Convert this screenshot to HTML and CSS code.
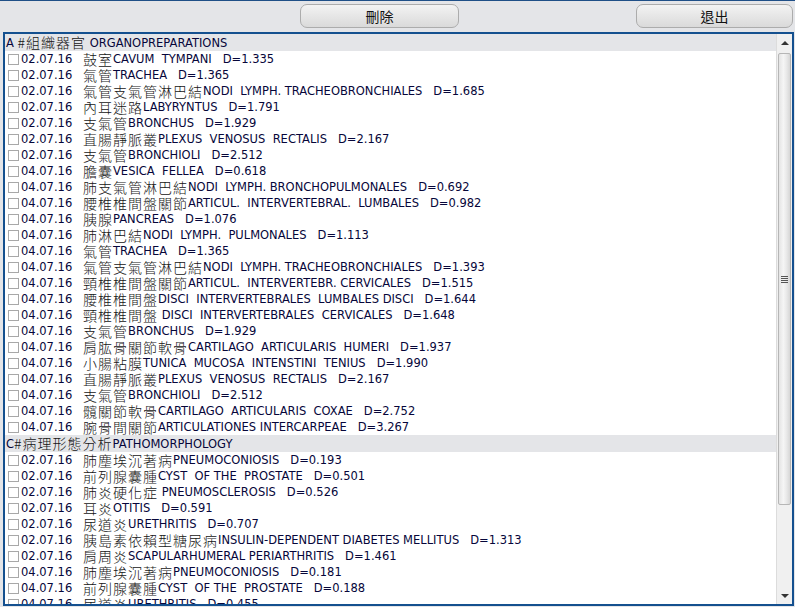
FILE: index.html
```html
<!DOCTYPE html>
<html>
<head>
    <meta charset="utf-8">
    <title>Records</title>
    <link rel="stylesheet" href="styles.css">
</head>
<body>
    <div class="toolbar">
        <button type="button" class="btn btn-delete">刪除</button>
        <button type="button" class="btn btn-exit">退出</button>
    </div>

    <div class="listbox">
        <div class="list">
            <div class="group"><span>A </span><span class="cn">#組織器官</span><span> ORGANOPREPARATIONS</span></div>
            <div class="row"><span class="check"></span><span class="date">02.07.16</span><span class="cn">鼓室</span><span>CAVUM  TYMPANI   D=1.335</span></div>
            <div class="row"><span class="check"></span><span class="date">02.07.16</span><span class="cn">氣管</span><span>TRACHEA   D=1.365</span></div>
            <div class="row"><span class="check"></span><span class="date">02.07.16</span><span class="cn">氣管支氣管淋巴結</span><span>NODI  LYMPH. TRACHEOBRONCHIALES   D=1.685</span></div>
            <div class="row"><span class="check"></span><span class="date">02.07.16</span><span class="cn">內耳迷路</span><span>LABYRYNTUS   D=1.791</span></div>
            <div class="row"><span class="check"></span><span class="date">02.07.16</span><span class="cn">支氣管</span><span>BRONCHUS   D=1.929</span></div>
            <div class="row"><span class="check"></span><span class="date">02.07.16</span><span class="cn">直腸靜脈叢</span><span>PLEXUS  VENOSUS  RECTALIS   D=2.167</span></div>
            <div class="row"><span class="check"></span><span class="date">02.07.16</span><span class="cn">支氣管</span><span>BRONCHIOLI   D=2.512</span></div>
            <div class="row"><span class="check"></span><span class="date">04.07.16</span><span class="cn">膽囊</span><span>VESICA  FELLEA   D=0.618</span></div>
            <div class="row"><span class="check"></span><span class="date">04.07.16</span><span class="cn">肺支氣管淋巴結</span><span>NODI  LYMPH. BRONCHOPULMONALES   D=0.692</span></div>
            <div class="row"><span class="check"></span><span class="date">04.07.16</span><span class="cn">腰椎椎間盤關節</span><span>ARTICUL.  INTERVERTEBRAL.  LUMBALES   D=0.982</span></div>
            <div class="row"><span class="check"></span><span class="date">04.07.16</span><span class="cn">胰腺</span><span>PANCREAS   D=1.076</span></div>
            <div class="row"><span class="check"></span><span class="date">04.07.16</span><span class="cn">肺淋巴結</span><span>NODI  LYMPH.  PULMONALES   D=1.113</span></div>
            <div class="row"><span class="check"></span><span class="date">04.07.16</span><span class="cn">氣管</span><span>TRACHEA   D=1.365</span></div>
            <div class="row"><span class="check"></span><span class="date">04.07.16</span><span class="cn">氣管支氣管淋巴結</span><span>NODI  LYMPH. TRACHEOBRONCHIALES   D=1.393</span></div>
            <div class="row"><span class="check"></span><span class="date">04.07.16</span><span class="cn">頸椎椎間盤關節</span><span>ARTICUL.  INTERVERTEBR. CERVICALES   D=1.515</span></div>
            <div class="row"><span class="check"></span><span class="date">04.07.16</span><span class="cn">腰椎椎間盤</span><span>DISCI  INTERVERTEBRALES  LUMBALES DISCI   D=1.644</span></div>
            <div class="row"><span class="check"></span><span class="date">04.07.16</span><span class="cn">頸椎椎間盤</span><span> DISCI  INTERVERTEBRALES  CERVICALES   D=1.648</span></div>
            <div class="row"><span class="check"></span><span class="date">04.07.16</span><span class="cn">支氣管</span><span>BRONCHUS   D=1.929</span></div>
            <div class="row"><span class="check"></span><span class="date">04.07.16</span><span class="cn">肩肱骨關節軟骨</span><span>CARTILAGO  ARTICULARIS  HUMERI   D=1.937</span></div>
            <div class="row"><span class="check"></span><span class="date">04.07.16</span><span class="cn">小腸粘膜</span><span>TUNICA  MUCOSA  INTENSTINI  TENIUS   D=1.990</span></div>
            <div class="row"><span class="check"></span><span class="date">04.07.16</span><span class="cn">直腸靜脈叢</span><span>PLEXUS  VENOSUS  RECTALIS   D=2.167</span></div>
            <div class="row"><span class="check"></span><span class="date">04.07.16</span><span class="cn">支氣管</span><span>BRONCHIOLI   D=2.512</span></div>
            <div class="row"><span class="check"></span><span class="date">04.07.16</span><span class="cn">髖關節軟骨</span><span>CARTILAGO  ARTICULARIS  COXAE   D=2.752</span></div>
            <div class="row"><span class="check"></span><span class="date">04.07.16</span><span class="cn">腕骨間關節</span><span>ARTICULATIONES INTERCARPEAE   D=3.267</span></div>

            <div class="group"><span>C</span><span class="cn">#病理形態分析</span><span>PATHOMORPHOLOGY</span></div>
            <div class="row"><span class="check"></span><span class="date">02.07.16</span><span class="cn">肺塵埃沉著病</span><span>PNEUMOCONIOSIS   D=0.193</span></div>
            <div class="row"><span class="check"></span><span class="date">02.07.16</span><span class="cn">前列腺囊腫</span><span>CYST  OF THE  PROSTATE   D=0.501</span></div>
            <div class="row"><span class="check"></span><span class="date">02.07.16</span><span class="cn">肺炎硬化症</span><span> PNEUMOSCLEROSIS   D=0.526</span></div>
            <div class="row"><span class="check"></span><span class="date">02.07.16</span><span class="cn">耳炎</span><span>OTITIS   D=0.591</span></div>
            <div class="row"><span class="check"></span><span class="date">02.07.16</span><span class="cn">尿道炎</span><span>URETHRITIS   D=0.707</span></div>
            <div class="row"><span class="check"></span><span class="date">02.07.16</span><span class="cn">胰島素依賴型糖尿病</span><span>INSULIN-DEPENDENT DIABETES MELLITUS   D=1.313</span></div>
            <div class="row"><span class="check"></span><span class="date">02.07.16</span><span class="cn">肩周炎</span><span>SCAPULARHUMERAL PERIARTHRITIS   D=1.461</span></div>
            <div class="row"><span class="check"></span><span class="date">04.07.16</span><span class="cn">肺塵埃沉著病</span><span>PNEUMOCONIOSIS   D=0.181</span></div>
            <div class="row"><span class="check"></span><span class="date">04.07.16</span><span class="cn">前列腺囊腫</span><span>CYST  OF THE  PROSTATE   D=0.188</span></div>
            <div class="row"><span class="check"></span><span class="date">04.07.16</span><span class="cn">尿道炎</span><span>URETHRITIS   D=0.455</span></div>
        </div>

        <div class="scrollbar">
            <div class="arrow"><span class="tri tri-up"></span></div>
            <div class="track">
                <div class="thumb"><span class="grip"></span></div>
            </div>
            <div class="arrow"><span class="tri tri-down"></span></div>
        </div>
    </div>
</body>
</html>
```

FILE: styles.css
```css
* {
    box-sizing: border-box;
}

html, body {
    height: 607px;
    overflow: hidden;
}

body {
    margin: 0;
    background: #e4e5e8;
    font-family: "DejaVu Sans", Verdana, sans-serif;
    font-size: 11.5px;
    color: #06063a;
}

.toolbar {
    display: flex;
    align-items: flex-start;
    height: 32px;
    padding-top: 3px;
    border-top: 1px solid #1f4f87;
}

.btn {
    height: 24px;
    padding: 0;
    border: 1px solid #acacac;
    border-radius: 7px;
    background: linear-gradient(#f3f3f3, #e6e6e6 50%, #dadada);
    font-family: "Noto Sans CJK TC", sans-serif;
    font-size: 14px;
    line-height: 20px;
    color: #111;
}

.btn-delete {
    margin-left: 300px;
    width: 159px;
}

.btn-exit {
    margin-left: auto;
    margin-right: 2px;
    width: 157px;
}

.listbox {
    display: grid;
    grid-template-columns: 1fr 16px;
    width: 791px;
    height: 574px;
    margin-left: 3px;
    border: 2px solid #14508f;
    background: #fff;
}

.list {
    overflow: hidden;
}

.group,
.row {
    display: flex;
    align-items: center;
    white-space: pre;
}

.group {
    height: 17px;
    padding-left: 1px;
    background: #e4e5e8;
}

.row {
    height: 16px;
}

.check {
    flex: none;
    width: 11px;
    height: 11px;
    margin: 0 2px 0 3px;
    border: 1px solid #a8a8a8;
    background: #fff;
}

.date {
    flex: none;
    width: 62px;
}

.cn {
    font-family: "Noto Sans CJK TC", sans-serif;
    font-size: 14px;
    font-weight: 300;
    letter-spacing: 1px;
    line-height: 15px;
    color: #141414;
}

.scrollbar {
    display: flex;
    flex-direction: column;
    background: #f0f0f0;
    border-left: 1px solid #dcdcdc;
}

.arrow {
    display: flex;
    align-items: center;
    justify-content: center;
    height: 17px;
}

.tri {
    width: 0;
    height: 0;
    border-left: 4px solid transparent;
    border-right: 4px solid transparent;
}

.tri-up {
    border-bottom: 4px solid #333;
}

.tri-down {
    border-top: 4px solid #333;
}

.track {
    flex: 1;
    padding: 2px 1px 0 1px;
}

.thumb {
    display: flex;
    align-items: center;
    justify-content: center;
    height: 452px;
    border: 1px solid #b6b6b6;
    border-radius: 2px;
    background: linear-gradient(to right, #e4e4e4, #f5f5f5 40%, #e8e8e8 70%, #d6d6d6);
}

.grip {
    width: 7px;
    height: 7px;
    background: repeating-linear-gradient(#555 0 1px, transparent 1px 2px);
}
```
